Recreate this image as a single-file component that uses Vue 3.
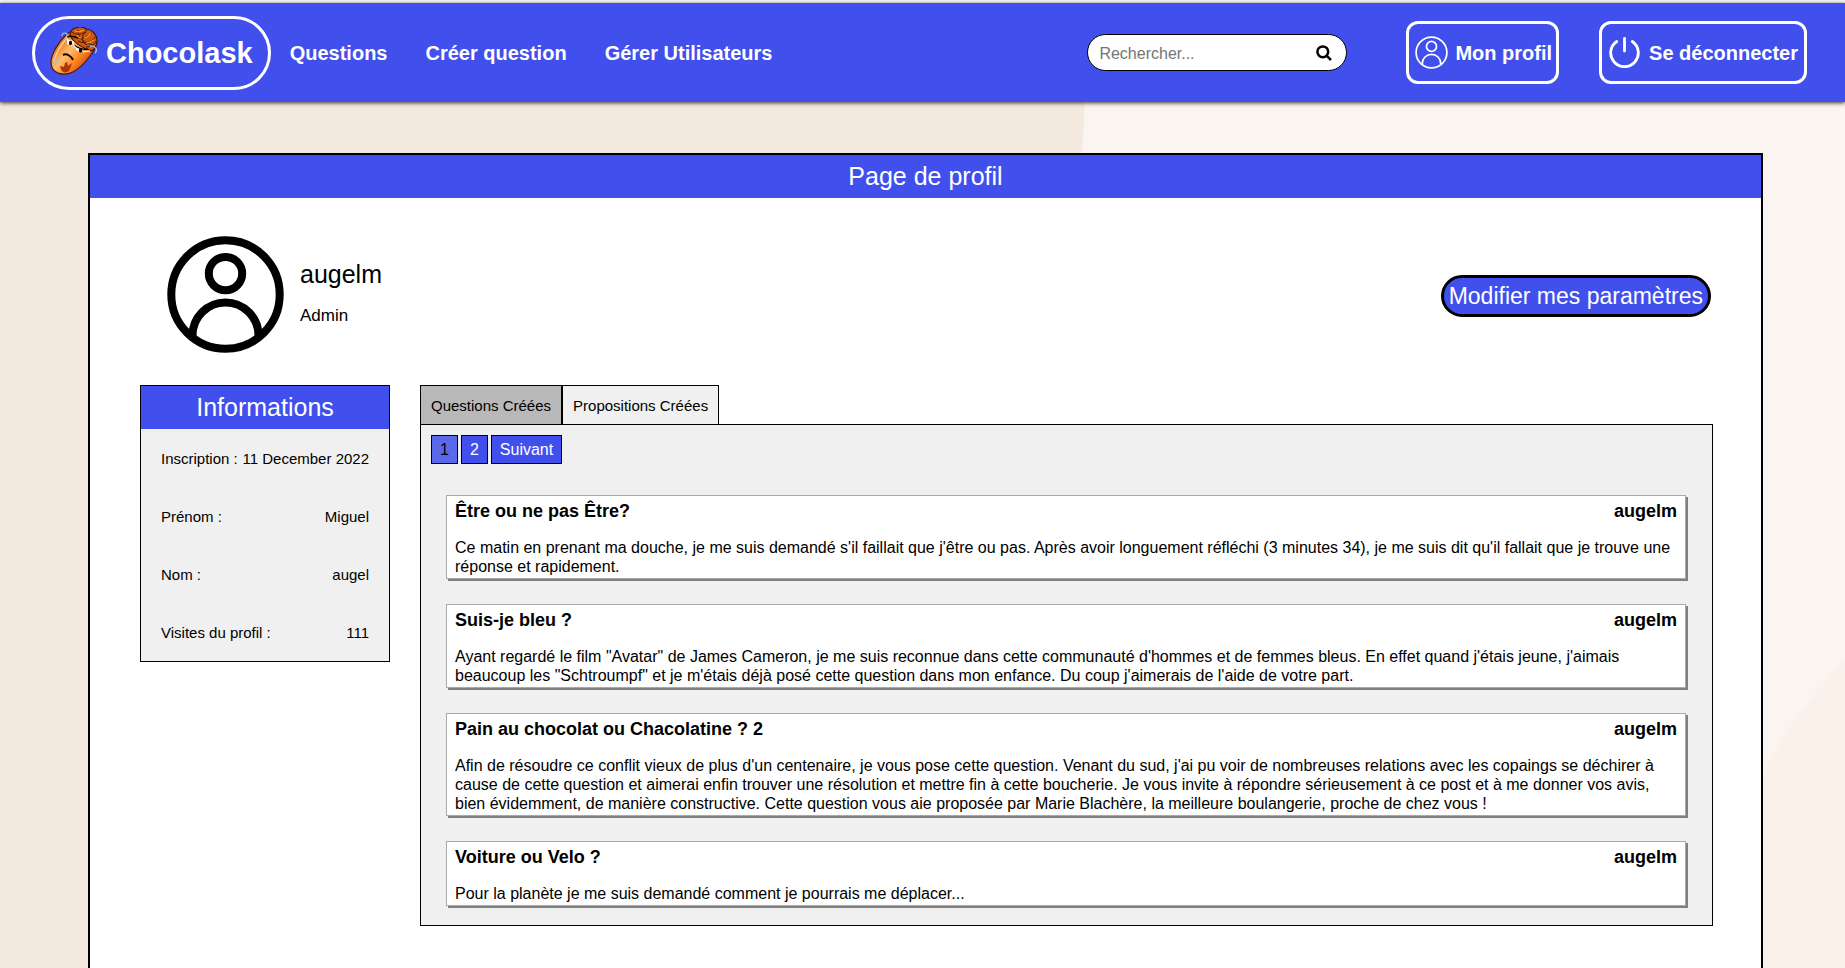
<script setup>
import { ref } from 'vue'

const search = ref('')
const activeTab = ref(0)
const tabs = ['Questions Créées', 'Propositions Créées']

const infos = [
  { label: 'Inscription :', value: '11 December 2022' },
  { label: 'Prénom :', value: 'Miguel' },
  { label: 'Nom :', value: 'augel' },
  { label: 'Visites du profil :', value: '111' },
]

const questions = [
  {
    title: 'Être ou ne pas Être?',
    author: 'augelm',
    text: "Ce matin en prenant ma douche, je me suis demandé s'il faillait que j'être ou pas. Après avoir longuement réfléchi (3 minutes 34), je me suis dit qu'il fallait que je trouve une réponse et rapidement.",
  },
  {
    title: 'Suis-je bleu ?',
    author: 'augelm',
    text: 'Ayant regardé le film "Avatar" de James Cameron, je me suis reconnue dans cette communauté d\'hommes et de femmes bleus. En effet quand j\'étais jeune, j\'aimais beaucoup les "Schtroumpf" et je m\'étais déjà posé cette question dans mon enfance. Du coup j\'aimerais de l\'aide de votre part.',
  },
  {
    title: 'Pain au chocolat ou Chacolatine ? 2',
    author: 'augelm',
    text: "Afin de résoudre ce conflit vieux de plus d'un centenaire, je vous pose cette question. Venant du sud, j'ai pu voir de nombreuses relations avec les copaings se déchirer à cause de cette question et aimerai enfin trouver une résolution et mettre fin à cette boucherie. Je vous invite à répondre sérieusement à ce post et à me donner vos avis, bien évidemment, de manière constructive. Cette question vous aie proposée par Marie Blachère, la meilleure boulangerie, proche de chez vous !",
  },
  {
    title: 'Voiture ou Velo ?',
    author: 'augelm',
    text: 'Pour la planète je me suis demandé comment je pourrais me déplacer...',
  },
]
</script>

<template>
  <div class="page">
    <svg class="backdrop" viewBox="0 0 1845 968" preserveAspectRatio="none" aria-hidden="true">
      <path d="M1085 0 V95 C1084 125 1083 140 1081 160 C1070 300 1300 700 1500 968 H1845 V0 Z" fill="#faf5f0" />
      <path d="M1845 660 C1808 698 1780 736 1763 776 C1735 835 1720 900 1720 968 H1845 Z" fill="#f9f1ea" />
    </svg>

    <header class="topbar">
      <a class="brand" href="#">
        <svg class="brand-icon" viewBox="0 0 48 48" aria-hidden="true">
          <defs>
            <linearGradient id="crust" x1="0.15" y1="0.3" x2="0.75" y2="0.8">
              <stop offset="0" stop-color="#e8791c" />
              <stop offset="0.4" stop-color="#ffbd6e" />
              <stop offset="0.7" stop-color="#ff8a24" />
              <stop offset="1" stop-color="#d8500c" />
            </linearGradient>
          </defs>
          <path d="M1 35 C1 27 9 14 17 7 C24 1 36 3 43 9 C48 15 46 22 40 29 C35 36 29 42 23 45 C15 49 1 48 1 35 Z" fill="url(#crust)" stroke="#4d1b12" stroke-width="1.2" />
          <path d="M4 34 C6 26 12 16 18 10" fill="none" stroke="#ffd08c" stroke-width="1.6" />
          <path d="M20 9 C20 4 23 1 26 1 C29 -1 34 0 36 2 C42 2 47 8 47 13 C47 18 45 22 42 24 C35 22 25 17 20 9 Z" fill="#c9590f" stroke="#3d1208" stroke-width="1.2" />
          <path d="M22 5 C28 10 35 6 37 3 M24 9 C32 14 38 9 42 6 M28 14 C36 18 43 14 45 10 M36 20 C42 20 45 17 46 14 M28 3 C27 10 34 17 44 18 M36 5 C30 10 32 15 37 18" fill="none" stroke="#521907" stroke-width="1" />
          <path d="M25 4 C29 6 32 4 34 3 M34 11 C38 10 40 8 41 6 M36 16 C40 16 42 14 44 13 M27 8 C28 10 30 11 32 11" fill="none" stroke="#f8953a" stroke-width="1.2" />
          <path d="M17 12 L23 14 L22 19 L17 17 Z M26 19 L34 22 L31 26 L26 23 Z" fill="#fff" />
          <ellipse cx="20.5" cy="16" rx="1.6" ry="2.3" fill="#080404" />
          <ellipse cx="30.5" cy="23.5" rx="1.7" ry="2.2" fill="#080404" />
          <path d="M17 10 C21 8 24 10 28 11 M24 18 C28 21 33 23 38 22" fill="none" stroke="#140803" stroke-width="1.5" />
          <path d="M23 14 C23 18 24 20 27 22 M33 25 C35 25 37 24 40 24" fill="none" stroke="#fff" stroke-width="1.1" />
          <path d="M13 28 C17 26 21 29 23 33" fill="none" stroke="#160502" stroke-width="2" />
          <path d="M10 39 L14 40 L15 36 L17 35 L18 39 L22 36 L20 42 C18 47 12 46 11 42 Z" fill="#a83907" />
          <path d="M12 9 C12 5 18 5 17 9 C16 11 14 11 16 14 M40 20 C43 17 49 22 45 26 M4 33 C4 29 11 30 9 34 C8 36 5 35 5 39" fill="none" stroke="#a6c5df" stroke-width="1.2" />
        </svg>
        <span>Chocolask</span>
      </a>

      <nav class="links" aria-label="Navigation principale">
        <a href="#">Questions</a>
        <a href="#">Créer question</a>
        <a href="#">Gérer Utilisateurs</a>
      </nav>

      <form class="search" role="search" @submit.prevent>
        <input v-model="search" type="text" placeholder="Rechercher..." aria-label="Rechercher" />
        <button type="submit" aria-label="Lancer la recherche">
          <svg viewBox="0 0 16 16" aria-hidden="true">
            <circle cx="6.8" cy="6.8" r="5.4" />
            <path d="M10.8 10.8 L15 15" />
          </svg>
        </button>
      </form>

      <a class="action" href="#">
        <svg class="user-small" viewBox="0 0 33 33" aria-hidden="true">
          <circle cx="16.5" cy="16.5" r="15.4" />
          <circle cx="16.5" cy="10.4" r="5" />
          <path d="M7.3 28.5 V27.5 A9.2 9.2 0 0 1 25.7 27.5 V28.5" />
        </svg>
        <span>Mon profil</span>
      </a>

      <a class="action logout" href="#">
        <svg class="power" viewBox="0 0 31 31" aria-hidden="true">
          <path d="M7.7 4.5 A13.8 13.8 0 1 0 23.3 4.5" />
          <path d="M15.5 1.5 V14" />
        </svg>
        <span>Se déconnecter</span>
      </a>
    </header>

    <main class="profile">
      <h1 class="banner">Page de profil</h1>

      <section class="identity">
        <svg class="avatar" viewBox="0 0 117 117" aria-hidden="true">
          <circle cx="58.5" cy="58.5" r="54.2" />
          <circle cx="58.5" cy="37.6" r="16.7" />
          <path d="M25.5 101 V99.5 A33 33 0 0 1 91.5 99.5 V101" />
        </svg>
        <div class="names">
          <h2>augelm</h2>
          <p>Admin</p>
        </div>
        <button class="edit" type="button">Modifier mes paramètres</button>
      </section>

      <div class="columns">
        <section class="infos">
          <h2 class="banner">Informations</h2>
          <dl>
            <div v-for="info in infos" :key="info.label" class="info-row">
              <dt>{{ info.label }}</dt>
              <dd>{{ info.value }}</dd>
            </div>
          </dl>
        </section>

        <section class="activity">
          <div class="tabs" role="tablist">
            <button
              v-for="(tab, i) in tabs"
              :key="tab"
              type="button"
              role="tab"
              :aria-selected="activeTab === i"
              :class="{ active: activeTab === i }"
              @click="activeTab = i"
            >{{ tab }}</button>
          </div>

          <div class="panel" role="tabpanel">
            <nav class="pager" aria-label="Pagination">
              <a class="current" href="#" aria-current="page">1</a>
              <a href="#">2</a>
              <a href="#">Suivant</a>
            </nav>

            <div class="questions">
              <article v-for="q in questions" :key="q.title" class="question">
                <header>
                  <h3>{{ q.title }}</h3>
                  <span>{{ q.author }}</span>
                </header>
                <p>{{ q.text }}</p>
              </article>
            </div>
          </div>
        </section>
      </div>
    </main>
  </div>
</template>

<style>
body {
  margin: 0;
  background: #f4e9df;
}
</style>

<style scoped>
* {
  box-sizing: border-box;
}

h1,
h2,
h3,
p,
dl,
dd {
  margin: 0;
  font-weight: normal;
}

button,
input {
  font-family: inherit;
}

.page {
  position: relative;
  display: flex;
  flex-direction: column;
  min-height: 100vh;
  border-top: 3px solid #f6f6f8;
  font-family: "Liberation Sans", Arial, sans-serif;
  color: #000;
}

.backdrop {
  position: absolute;
  inset: 0;
  width: 100%;
  height: 100%;
}

.topbar {
  position: relative;
  display: flex;
  align-items: center;
  min-height: 99px;
  padding: 0 38px 0 32px;
  background: #414fed;
  box-shadow: 0 1px 4px #3a3430;
}

.topbar a {
  color: #fff;
  font-size: 20px;
  font-weight: bold;
  text-decoration: none;
  white-space: nowrap;
}

.topbar .brand {
  display: flex;
  align-items: center;
  gap: 8px;
  height: 74px;
  padding: 0 15px;
  border: 3px solid #fff;
  border-radius: 37px;
  font-size: 29px;
}

.brand-icon {
  width: 48px;
  height: 48px;
  margin-bottom: 4px;
}

.brand span,
.action span,
.links {
  padding-top: 2px;
}

.links {
  display: flex;
  gap: 38px;
  margin-left: 19px;
}

.search {
  display: flex;
  align-items: center;
  width: 260px;
  height: 37px;
  margin-left: auto;
  padding: 0 14px 0 11px;
  border: 1px solid #000;
  border-radius: 19px;
  background: #fff;
}

.search input {
  flex: 1;
  min-width: 0;
  padding: 2px 0 0;
  border: 0;
  outline: 0;
  background: transparent;
  font-size: 16px;
}

.search input::placeholder {
  color: #757575;
}

.search button {
  display: flex;
  padding: 0;
  border: 0;
  background: none;
}

.search svg {
  width: 16px;
  height: 16px;
  fill: none;
  stroke: #000;
  stroke-width: 2.5;
}

.action {
  display: flex;
  align-items: center;
  gap: 7px;
  height: 63px;
  margin-left: 59px;
  padding: 0 4px 0 6px;
  border: 3px solid #fff;
  border-radius: 12px;
}

.logout {
  gap: 9px;
  margin-left: 40px;
  padding: 0 6px 0 7px;
}

.action svg {
  fill: none;
  stroke: #fff;
}

.user-small {
  width: 33px;
  height: 33px;
  stroke-width: 1.7;
}

.power {
  width: 31px;
  height: 31px;
  stroke-width: 2.8;
  stroke-linecap: round;
}

.profile {
  position: relative;
  flex: 1;
  margin: 51px 82px 0 88px;
  padding-bottom: 40px;
  border: 2px solid #000;
  border-bottom: 0;
  background: #fff;
}

.banner {
  background: #414fed;
  color: #fff;
  font-size: 25px;
  line-height: 43px;
  text-align: center;
}

.identity {
  display: flex;
  align-items: center;
  padding: 38px 50px 32px 77px;
}

.avatar {
  width: 117px;
  height: 117px;
  fill: none;
  stroke: #000;
  stroke-width: 8;
}

.names {
  display: flex;
  flex-direction: column;
  gap: 17px;
  margin-left: 16px;
  padding-bottom: 3px;
}

.names h2 {
  font-size: 25px;
  line-height: 29px;
}

.names p {
  font-size: 17px;
  line-height: 20px;
}

.edit {
  height: 42px;
  margin: 3px 0 0 auto;
  padding: 0 5px;
  border: 3px solid #000;
  border-radius: 21px;
  background: #414fed;
  color: #fff;
  font-size: 23px;
}

.columns {
  display: flex;
  align-items: flex-start;
  gap: 30px;
  padding: 0 48px 0 50px;
}

.infos {
  flex: none;
  width: 250px;
  border: 1px solid #000;
  background: #f0f0f0;
  font-size: 15px;
}

.info-row {
  display: flex;
  align-items: center;
  justify-content: space-between;
  height: 58px;
  padding: 0 20px;
  white-space: nowrap;
}

.activity {
  flex: 1;
  min-width: 0;
}

.tabs {
  display: flex;
}

.tabs button {
  height: 39px;
  padding: 0 10px;
  border: 1px solid #000;
  border-bottom: 0;
  background: #f0f0f0;
  color: #000;
  font-size: 15px;
}

.tabs .active {
  background: #b9b9b9;
}

.panel {
  padding: 10px 26px 19px 10px;
  border: 1px solid #000;
  background: #f0f0f0;
}

.pager {
  display: flex;
  gap: 3px;
}

.pager a {
  padding: 0 8px;
  border: 1px solid #000;
  background: #414fed;
  color: #fff;
  font-size: 16px;
  line-height: 27px;
  text-decoration: none;
}

.pager .current {
  background: #5c68ea;
  color: #000;
}

.questions {
  display: flex;
  flex-direction: column;
  gap: 25px;
  margin: 31px 0 0 15px;
}

.question {
  padding: 5px 8px 2px;
  border: 1px solid #a9a9a9;
  background: #fff;
  box-shadow: 2px 2px 0 #808080;
}

.question header {
  display: flex;
  justify-content: space-between;
  margin-bottom: 16px;
  font-size: 18px;
  font-weight: bold;
  line-height: 21px;
}

.question h3 {
  font-size: 18px;
  font-weight: bold;
}

.question p {
  font-size: 16px;
  line-height: 19px;
}
</style>
